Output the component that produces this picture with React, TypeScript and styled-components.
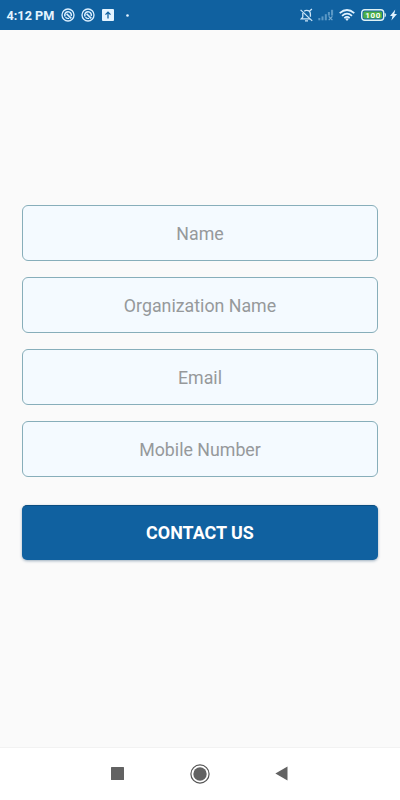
import React from 'react';
import styled, { createGlobalStyle } from 'styled-components';

const GlobalStyle = createGlobalStyle`
  *, *::before, *::after { box-sizing: border-box; }
  body { margin: 0; font-family: Roboto, sans-serif; background: #fafafa; }
`;

const Screen = styled.div`
  width: 400px;
  height: 800px;
  display: flex;
  flex-direction: column;
  background: #fafafa;
  overflow: hidden;
`;

const StatusBar = styled.header`
  height: 30px;
  flex: none;
  display: flex;
  align-items: center;
  justify-content: space-between;
  padding: 0 3px 0 6.5px;
  background: #1061a0;
  color: #e4f4ff;
`;

const StatusGroup = styled.div`
  display: flex;
  align-items: center;
  svg { display: block; flex: none; }
`;

const Clock = styled.span`
  width: 54.5px;
  font-size: 12.7px;
  line-height: 16px;
  font-weight: 700;
  white-space: nowrap;
  padding-top: 1px;
`;

const Slot = styled.span<{ $gap: number }>`
  margin-left: ${({ $gap }) => $gap}px;
`;

const Form = styled.form`
  flex: 1;
  display: flex;
  flex-direction: column;
  padding: 175px 22px 0;
`;

const Fields = styled.div`
  display: flex;
  flex-direction: column;
  gap: 16.1px;
`;

const Field = styled.input`
  width: 100%;
  height: 56px;
  border: 1px solid #87aeba;
  border-radius: 6px;
  background: #f4faff;
  padding: 0 16px;
  text-align: center;
  font-family: Roboto, sans-serif;
  font-size: 17.8px;
  color: #333;
  outline: none;
  &::placeholder { color: #96999b; opacity: 1; }
`;

const SubmitButton = styled.button`
  height: 55px;
  margin-top: 27.7px;
  border: 0;
  border-top: 1px solid #0a4d80;
  border-radius: 5px;
  background: #1061a0;
  box-shadow: 0 1px 3px rgba(16, 60, 100, 0.4);
  color: #fff;
  font-family: Roboto, sans-serif;
  font-size: 17.9px;
  font-weight: 700;
  padding: 0;
`;

const NavBar = styled.nav`
  height: 53px;
  flex: none;
  display: flex;
  justify-content: center;
  padding-right: 3px;
  border-top: 1px solid #f2f2f2;
  background: #fff;
`;

const NavButton = styled.button<{ $width: number }>`
  width: ${({ $width }) => $width}px;
  height: 51px;
  padding: 0;
  border: 0;
  background: none;
  display: flex;
  align-items: center;
  justify-content: center;
  svg { display: block; }
`;

const BadgeIcon = () => (
  <svg width="14" height="14" viewBox="0 0 14 14" fill="none" stroke="#dcefff">
    <circle cx="7" cy="7" r="6" strokeWidth="1.3" />
    <path d="M4.1 8.5A3.3 3.3 0 1 1 10.2 8" strokeWidth="1.5" />
    <path d="M5.6 5.9L10.3 10.4" strokeWidth="1.6" />
    <path d="M4.4 9.2Q5.8 11 8.2 10.4" strokeWidth="1.1" />
  </svg>
);

const UploadIcon = () => (
  <svg width="12" height="12" viewBox="0 0 12 12">
    <rect width="12" height="12" rx="1" fill="#e4f4ff" />
    <path d="M6 9.4V3.2M3.5 5.6L6 3.1l2.5 2.5" fill="none" stroke="#1061a0" strokeWidth="1.3" />
  </svg>
);

const DotIcon = () => (
  <svg width="3" height="3" viewBox="0 0 3 3"><circle cx="1.5" cy="1.5" r="1.3" fill="#e4f4ff" /></svg>
);

const MutedBellIcon = () => (
  <svg width="14" height="14" viewBox="0 0 14 14" fill="none" stroke="#cde6f8" strokeWidth="1.3">
    <path d="M0.6 1.9L12.2 12.9" />
    <path d="M4.2 3.3C4.8 2.7 5.5 2.3 6.5 2.3c2.5 0 3.9 1.6 3.9 4v2.4M2.8 5.1v4L1.2 10.9h8.8" />
    <path d="M5 12.9h3M9.4 3.3l2.5-2.2" />
  </svg>
);

const SignalIcon = () => (
  <svg width="16" height="12" viewBox="0 0 16 12">
    <g fill="#5b98c5">
      <rect x="0.3" y="9" width="2" height="2.3" />
      <rect x="3.5" y="7.4" width="2" height="3.9" />
      <rect x="6.8" y="5.2" width="2" height="6.1" />
      <rect x="9.9" y="3" width="2" height="3.6" />
      <rect x="13" y="0.8" width="2.1" height="5.8" />
    </g>
    <path d="M10.7 7.4l3.7 3.8M14.4 7.4l-3.7 3.8" stroke="#76abd0" strokeWidth="1.2" />
  </svg>
);

const WifiIcon = () => (
  <svg width="16" height="12" viewBox="0 0 16 12" fill="none" stroke="#e0f2ff" strokeWidth="1.7">
    <path d="M0.7 4.2Q8 -2.2 15.3 4.2M3 6.8Q8 2.4 13 6.8M5.3 9.1Q8 6.8 10.7 9.1" />
    <path d="M6.2 9.8Q8 8.5 9.8 9.8L8 11.9z" fill="#e0f2ff" stroke="none" />
  </svg>
);

const BatteryIcon = () => (
  <svg width="26" height="12" viewBox="0 0 26 12">
    <rect x="0.7" y="0.7" width="22" height="10.6" rx="3" fill="none" stroke="#dff2f5" strokeWidth="1.4" />
    <rect x="2.3" y="2.4" width="18.8" height="7.2" rx="1.4" fill="#4caf45" />
    <path d="M24 4.2q1.5 1.8 0 3.6z" fill="#dff2f5" stroke="#dff2f5" strokeWidth=".6" />
    <text x="11.8" y="8.9" textAnchor="middle" textLength="15" fill="#fff" fontFamily="Roboto, sans-serif" fontSize="8" fontWeight="700">100</text>
  </svg>
);

const BoltIcon = () => (
  <svg width="7" height="12" viewBox="0 0 7 12"><path d="M5.3 0.6L0 6.9h2.5L1.4 11.6 7 4.9H4.3z" fill="#e0f2ff" /></svg>
);

const SquareIcon = () => (
  <svg width="13" height="13" viewBox="0 0 13 13"><rect width="13" height="13" rx=".5" fill="#626262" /></svg>
);

const HomeIcon = () => (
  <svg width="20" height="20" viewBox="0 0 20 20">
    <circle cx="10" cy="10" r="9.1" fill="none" stroke="#555" strokeWidth="1.2" />
    <circle cx="10" cy="10" r="6.7" fill="#626262" />
  </svg>
);

const BackIcon = () => (
  <svg width="13" height="15" viewBox="0 0 13 15"><path d="M12.5 0.4v14.2L0.4 7.5z" fill="#626262" /></svg>
);

const fields = ['Name', 'Organization Name', 'Email', 'Mobile Number'];

export default function App() {
  return (
    <>
      <GlobalStyle />
      <Screen>
        <StatusBar>
          <StatusGroup>
            <Clock>4:12 PM</Clock>
            <Slot $gap={0}><BadgeIcon /></Slot>
            <Slot $gap={6}><BadgeIcon /></Slot>
            <Slot $gap={7}><UploadIcon /></Slot>
            <Slot $gap={12}><DotIcon /></Slot>
          </StatusGroup>
          <StatusGroup>
            <Slot $gap={0}><MutedBellIcon /></Slot>
            <Slot $gap={4}><SignalIcon /></Slot>
            <Slot $gap={5}><WifiIcon /></Slot>
            <Slot $gap={6}><BatteryIcon /></Slot>
            <Slot $gap={3}><BoltIcon /></Slot>
          </StatusGroup>
        </StatusBar>
        <Form onSubmit={(event: React.FormEvent) => event.preventDefault()}>
          <Fields>
            {fields.map((label) => (
              <Field key={label} placeholder={label} aria-label={label} />
            ))}
          </Fields>
          <SubmitButton type="submit">CONTACT US</SubmitButton>
        </Form>
        <NavBar>
          <NavButton $width={83} aria-label="Recent apps"><SquareIcon /></NavButton>
          <NavButton $width={82} aria-label="Home"><HomeIcon /></NavButton>
          <NavButton $width={81} aria-label="Back"><BackIcon /></NavButton>
        </NavBar>
      </Screen>
    </>
  );
}
